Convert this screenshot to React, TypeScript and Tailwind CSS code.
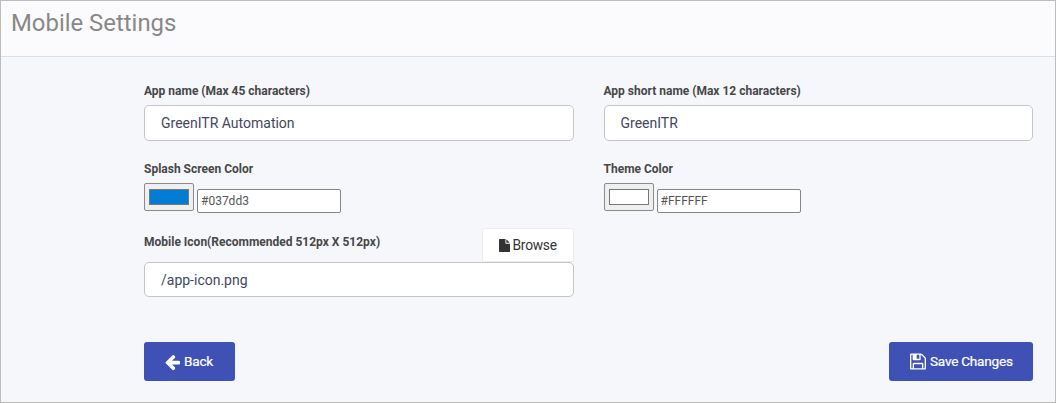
import React from 'react';

type IconProps = { className?: string };

function ArrowLeftIcon({ className }: IconProps) {
  return (
    <svg viewBox="0 -1536 1536 1792" className={className} fill="currentColor" aria-hidden="true">
      <path
        transform="scale(1 -1)"
        d="M1536 640v-128q0 -53 -32.5 -90.5t-84.5 -37.5h-704l293 -294q38 -36 38 -90t-38 -90l-75 -76q-37 -37 -90 -37q-52 0 -91 37l-651 652q-37 37 -37 90q0 52 37 91l651 650q38 38 91 38q52 0 90 -38l75 -74q38 -38 38 -91t-38 -91l-293 -293h704q52 0 84.5 -37.5t32.5 -90.5z"
      />
    </svg>
  );
}

function SaveIcon({ className }: IconProps) {
  return (
    <svg viewBox="0 -1536 1536 1792" className={className} fill="currentColor" aria-hidden="true">
      <path
        transform="scale(1 -1)"
        d="M384 0h768v384h-768v-384zM1280 0h128v896q0 14 -10 38.5t-20 34.5l-281 281q-10 10 -34 20t-39 10v-416q0 -40 -28 -68t-68 -28h-576q-40 0 -68 28t-28 68v416h-128v-1280h128v416q0 40 28 68t68 28h832q40 0 68 -28t28 -68v-416zM896 928v320q0 13 -9.5 22.5t-22.5 9.5h-192q-13 0 -22.5 -9.5t-9.5 -22.5v-320q0 -13 9.5 -22.5t22.5 -9.5h192q13 0 22.5 9.5t9.5 22.5zM1536 896v-928q0 -40 -28 -68t-68 -28h-1344q-40 0 -68 28t-28 68v1344q0 40 28 68t68 28h928q40 0 88 -20t76 -48l280 -280q28 -28 48 -76t20 -88z"
        fillRule="evenodd"
      />
    </svg>
  );
}

function FileIcon({ className }: IconProps) {
  return (
    <svg viewBox="0 -1536 1536 1792" className={className} fill="currentColor" aria-hidden="true">
      <path
        transform="scale(1 -1)"
        d="M1024 1024v472q22 -14 36 -28l408 -408q14 -14 28 -36h-472zM896 992q0 -40 28 -68t68 -28h544v-1056q0 -40 -28 -68t-68 -28h-1344q-40 0 -68 28t-28 68v1600q0 40 28 68t68 28h800v-544z"
      />
    </svg>
  );
}

const labelClass = 'block text-[12px] leading-[18px] font-bold text-[#474747]';
const inputClass =
  'block w-full rounded-[5px] border border-[#c5c5c7] bg-white px-4 text-[14px] text-[#434761] outline-none';
const buttonClass =
  'flex h-[39px] items-center rounded-[3px] bg-[#3f51b5] text-[13.6px] tracking-[-0.24px] font-normal text-white [-webkit-text-stroke:0.2px_white]';

function TextField({ label, value }: { label: string; value: string }) {
  return (
    <label className="block">
      <span className={labelClass}>{label}</span>
      <input className={`${inputClass} mt-[5px] h-9`} defaultValue={value} />
    </label>
  );
}

function ColorField({ label, value, swatch }: { label: string; value: string; swatch: string }) {
  return (
    <div>
      <span className={labelClass}>{label}</span>
      <div className="mt-[5px] flex h-[30px] items-start">
        <button
          aria-label={label}
          className="h-[28px] w-[50px] rounded-[2px] border border-[#8b8b8b] bg-[#efefef] px-1 py-[5px]"
        >
          <span className={`block h-4 w-10 border border-[#777777] ${swatch}`} />
        </button>
        <input
          className="mt-[6px] ml-[3px] h-6 w-[144px] rounded-[2px] border border-[#858585] bg-white px-[3px] text-[12px] text-[#555555] outline-none"
          defaultValue={value}
        />
      </div>
    </div>
  );
}

export default function App() {
  return (
    <div className="h-[403px] w-full border border-[#bcbcbc] bg-[#f5f7fb] font-[Roboto,sans-serif]">
      <header className="h-14 border-b border-[#d8e0e9] bg-[#fbfbfe] pt-[7px] pl-[10px]">
        <h1 className="text-[23.9px] leading-[30px] font-normal text-[#888888]">Mobile Settings</h1>
      </header>
      <main className="pt-[25px] pr-[22px] pl-[143px]">
        <div className="grid grid-cols-2 gap-x-[30px]">
          <TextField label="App name (Max 45 characters)" value="GreenITR Automation" />
          <TextField label="App short name (Max 12 characters)" value="GreenITR" />
        </div>
        <div className="mt-[19px] grid grid-cols-2 gap-x-[30px]">
          <ColorField label="Splash Screen Color" value="#037dd3" swatch="bg-[#037dd3]" />
          <ColorField label="Theme Color" value="#FFFFFF" swatch="bg-white" />
        </div>
        <div className="mt-[15px] grid grid-cols-2 gap-x-[30px]">
          <div>
            <div className="flex h-[34px] items-start justify-between">
              <span className={`${labelClass} mt-[5px]`}>Mobile Icon(Recommended 512px X 512px)</span>
              <button className="flex h-[34px] w-[92px] items-center rounded-t-[3px] border border-[#ededf0] bg-white pl-[16px] text-[13.8px] tracking-[-0.25px] text-[#333333]">
                <FileIcon className="mr-[3px] h-[13px] w-[11px]" />
                Browse
              </button>
            </div>
            <input
              aria-label="Mobile Icon"
              className={`${inputClass} h-[35px] pt-px`}
              defaultValue="/app-icon.png"
            />
          </div>
        </div>
        <div className="mt-[45px] flex justify-between">
          <button className={`${buttonClass} w-[91px] pl-[21px]`}>
            <ArrowLeftIcon className="mr-1 h-[18px] w-[15px]" />
            Back
          </button>
          <button className={`${buttonClass} w-[144px] pl-[21px]`}>
            <SaveIcon className="mr-1 h-[19px] w-[16px]" />
            Save Changes
          </button>
        </div>
      </main>
    </div>
  );
}
